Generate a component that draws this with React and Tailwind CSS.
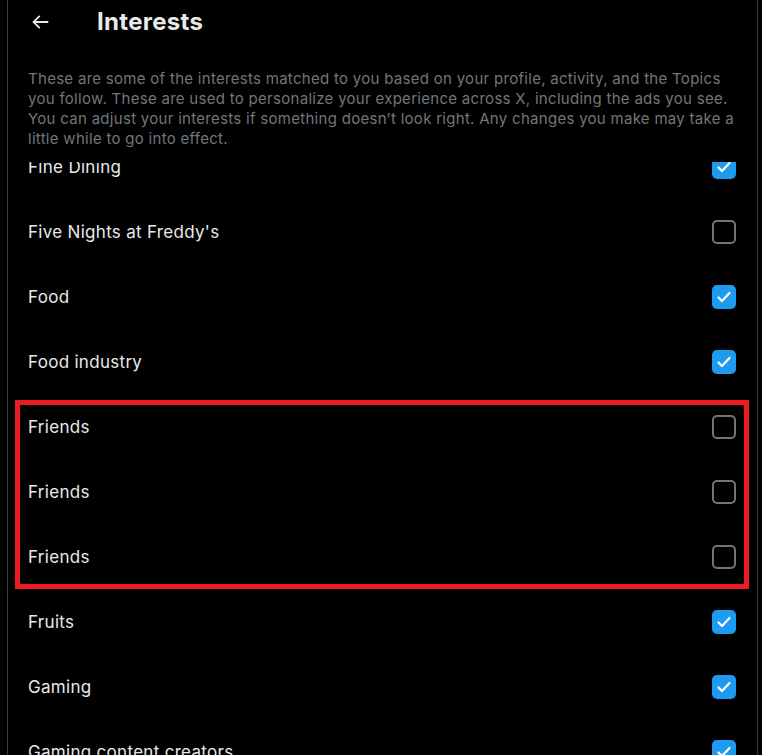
import React from "react";

const rows = [
  { name: "Fine Dining", on: true },
  { name: "Five Nights at Freddy's", on: false },
  { name: "Food", on: true },
  { name: "Food industry", on: true },
  { name: "Friends", on: false },
  { name: "Friends", on: false },
  { name: "Friends", on: false },
  { name: "Fruits", on: true },
  { name: "Gaming", on: true },
  { name: "Gaming content creators", on: true },
];

function Box({ on }) {
  if (on) {
    return (
      <div className="w-6 h-6 rounded-[5px] bg-[#1d9bf0] flex items-center justify-center">
        <svg viewBox="0 0 24 24" className="w-6 h-6" fill="none" stroke="white" strokeWidth="2.2" strokeLinecap="round" strokeLinejoin="round">
          <polyline points="6.5 12.5 10 16 17.5 8" />
        </svg>
      </div>
    );
  }
  return <div className="w-6 h-6 rounded-[5px] border-2 border-[#6e767d]" />;
}

export default function App() {
  return (
    <div className="h-[755px] bg-black overflow-hidden" style={{ fontFamily: 'Inter, "Noto Sans", sans-serif' }}>
      <div className="ml-[7px] w-[751px] h-full border-x border-[#3a3d40] flex flex-col">
        <div className="px-5 pb-[13px] bg-black relative z-10">
          <div className="h-[43px] flex items-center">
            <svg viewBox="0 0 24 24" className="w-[22px] h-[22px] ml-[1px]" fill="#e7e9ea">
              <path d="M7.414 13l5.043 5.04-1.414 1.42L3.586 12l7.457-7.46 1.414 1.42L7.414 11H21v2H7.414z" />
            </svg>
            <h1 className="ml-[46px] text-[24px] font-bold tracking-[0.3px] text-[#e7e9ea]">Interests</h1>
          </div>
          <p className="mt-[26px] text-[15px] leading-5 tracking-[0.29px] text-[#71767b]">
            These are some of the interests matched to you based on your profile, activity, and the Topics
            <br />
            you follow. These are used to personalize your experience across X, including the ads you see.
            <br />
            You can adjust your interests if something doesn’t look right. Any changes you make may take a
            <br />
            little while to go into effect.
          </p>
        </div>
        <div className="flex-1 overflow-hidden relative">
          <div className="-mt-[28px]">
            {rows.map((r, i) => (
              <div key={i} className="h-[65px] pl-5 pr-[21px] flex items-center justify-between">
                <span className="pt-[3px] text-[17px] tracking-[0.3px] text-[#e7e9ea]">{r.name}</span>
                <Box on={r.on} />
              </div>
            ))}
          </div>
        </div>
      </div>
      <div className="absolute left-[15px] top-[400px] w-[734px] h-[189px] border-[5px] border-[#ed1c24]" />
    </div>
  );
}
